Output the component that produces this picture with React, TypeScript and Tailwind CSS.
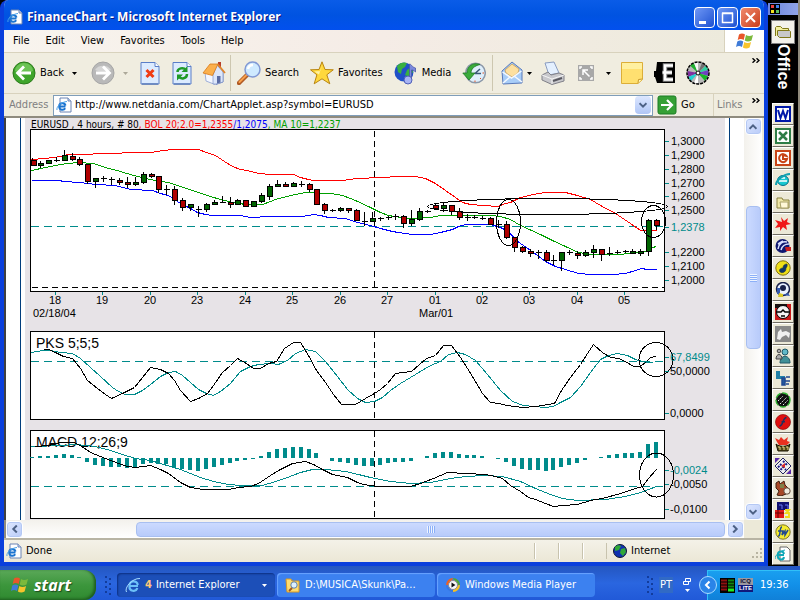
import type { ReactNode } from 'react';

type Candle = [kind: 'r' | 'g' | 'd', top: number, bottom: number, high: number, low: number];

const TEAL = '#008b8b';
const STEP = 7.9;
const FIRST = 32;

const candles: Candle[] = [
  ['r', 160, 165, 158, 166], ['g', 163, 165, 161, 168], ['g', 160, 163, 160, 164], ['d', 160, 160, 157, 162],
  ['g', 155, 160, 150, 161], ['r', 156, 159, 153, 161], ['r', 159, 164, 157, 166], ['r', 164, 181, 164, 184],
  ['g', 178, 181, 178, 188], ['d', 178, 178, 176, 182], ['d', 179, 179, 177, 185], ['r', 180, 182, 178, 185],
  ['r', 182, 184, 177, 188], ['g', 182, 184, 177, 186], ['g', 174, 182, 172, 184], ['r', 174, 176, 173, 178],
  ['r', 176, 189, 176, 193], ['d', 189, 189, 185, 195], ['r', 189, 200, 186, 205], ['r', 200, 207, 198, 211],
  ['g', 204, 207, 204, 211], ['d', 209, 209, 206, 217], ['g', 204, 209, 203, 212], ['g', 202, 204, 200, 205],
  ['d', 202, 202, 196, 203], ['r', 202, 204, 197, 208], ['g', 200, 204, 199, 205], ['r', 200, 206, 200, 206],
  ['g', 201, 206, 201, 206], ['g', 195, 201, 193, 203], ['g', 186, 196, 184, 200], ['g', 184, 186, 180, 187],
  ['r', 184, 186, 182, 187], ['g', 183, 186, 182, 187], ['d', 184, 184, 181, 187], ['r', 184, 189, 183, 192],
  ['r', 189, 204, 189, 205], ['r', 204, 210, 203, 214], ['d', 210, 210, 209, 212], ['g', 208, 210, 207, 212],
  ['r', 208, 210, 208, 213], ['r', 210, 220, 209, 221], ['d', 221, 221, 212, 226], ['g', 218, 221, 212, 222],
  ['d', 218, 218, 217, 221], ['d', 217, 217, 216, 220], ['d', 216, 216, 214, 220], ['r', 216, 223, 215, 228],
  ['g', 219, 223, 210, 226], ['g', 211, 219, 208, 221], ['d', 211, 211, 210, 213], ['r', 205, 208, 203, 210],
  ['g', 205, 208, 203, 212], ['r', 205, 211, 205, 215], ['r', 211, 217, 208, 220], ['d', 217, 217, 214, 221],
  ['d', 217, 217, 215, 219], ['d', 218, 218, 216, 220], ['r', 218, 224, 217, 225], ['d', 224, 224, 220, 228],
  ['r', 224, 237, 221, 239], ['r', 237, 247, 237, 252], ['r', 247, 251, 246, 253], ['r', 251, 253, 249, 257],
  ['d', 252, 252, 250, 259], ['r', 252, 260, 250, 262], ['d', 260, 260, 255, 265], ['g', 252, 260, 252, 271],
  ['d', 252, 252, 250, 255], ['r', 253, 255, 251, 259], ['g', 252, 255, 250, 257], ['g', 249, 252, 245, 258],
  ['r', 249, 254, 249, 261], ['d', 253, 253, 247, 256], ['d', 252, 252, 250, 254], ['d', 251, 251, 250, 253],
  ['g', 251, 253, 249, 254], ['g', 251, 253, 249, 256], ['g', 220, 251, 219, 256], ['r', 220, 225, 219, 230],
];

const histogram = [
  1, 2, 2, 3, 4, 3, 1, -4, -7, -8, -9, -9, -10, -9, -6, -5, -6, -6, -9, -11, -12, -13, -11, -9, -7, -5, -3, -2, -1, 2,
  6, 9, 10, 11, 11, 9, 5, 0, -3, -4, -5, -7, -8, -8, -7, -5, -4, -4, -3, 0, 2, 5, 6, 6, 4, 3, 3, 2, 0, -1,
  -4, -8, -11, -12, -12, -13, -12, -9, -7, -5, -2, 0, 1, 3, 4, 5, 5, 6, 14, 16,
];

const lines = [
  { color: '#ff0000', points: '31,159 45,158 60,156 67,154 92,154 93,153 120,153 123,152 150,152 163,150 172,149 198,149 206,152 215,155 224,161 232,166 240,169 247,170 258,173 270,174 293,174 300,177 308,179 313,180 342,180 356,178 382,177 398,176 415,176 425,178 435,183 445,190 455,197 462,202 470,204 497,206 505,203 510,202 520,197 533,194 545,192 565,192 577,195 590,199 600,205 615,213 630,223 640,230 656,230' },
  { color: '#00a000', points: '31,170 45,167 60,164 68,163 78,162 93,163 105,167 120,171 133,175 150,179 160,181 168,182 180,186 195,191 210,196 220,199 233,202 245,204 262,204 270,201 275,199 290,195 305,192 330,193 342,195 355,200 370,207 380,212 388,215 400,217 410,218 430,217 440,215 490,215 500,216 510,219 520,225 540,234 552,240 565,246 578,252 590,254 620,254 635,252 645,251 648,248 656,246' },
  { color: '#0000ff', points: '31,180 60,180 62,181 80,182 95,184 115,185 130,189 152,190 160,193 168,195 180,203 190,208 197,212 205,214 212,215 240,215 250,217 270,216 302,216 313,214 320,215 328,217 345,218 357,222 370,225 380,228 392,231 404,233 412,234 430,234 440,232 452,229 458,226 465,224 490,224 500,227 508,231 515,239 520,243 533,252 545,261 555,266 565,269 578,273 590,274 612,274 625,273 635,270 641,268 647,269 656,269' },
  { color: TEAL, points: '31,352 42,350 50,350 60,352 72,353 80,358 90,367 100,376 112,387 118,391 125,394 134,394 142,390 150,384 160,376 168,372 175,371 182,375 190,382 198,389 206,393 213,395 220,391 230,383 240,371 250,366 258,364 270,363 278,364 287,360 295,353 305,349 315,351 325,361 337,376 347,389 357,398 365,402 374,401 382,397 390,390 400,383 415,374 430,365 440,361 448,354 457,352 465,354 475,360 487,374 500,390 512,401 523,405 545,407 553,406 560,402 570,397 580,386 590,372 600,359 608,355 617,353 627,355 635,359 645,362 652,362' },
  { color: '#000', points: '43,349 48,349 55,352 63,356 72,358 80,368 87,380 97,388 105,394 111,398 122,393 134,387 142,377 150,367 160,369 168,373 174,380 180,390 190,401 198,398 207,393 213,385 222,372 230,365 237,358 246,363 253,368 260,368 268,363 276,361 284,348 293,342 300,342 308,355 316,370 325,382 333,394 341,404 355,404 365,398 374,393 380,389 387,383 395,373 411,371 426,358 435,355 443,345 451,345 460,357 467,368 475,381 482,393 490,402 499,403 506,405 523,407 535,406 554,403 561,390 570,377 580,364 587,353 593,344 602,352 610,357 618,358 625,361 633,366 640,366 646,361 650,357 656,356' },
  { color: TEAL, points: '31,446 60,445 75,444 95,446 110,450 122,454 135,458 150,460 160,463 170,466 180,469 190,473 200,477 213,481 228,484 240,485 262,485 275,481 287,477 300,472 312,469 325,469 345,471 358,474 370,477 390,481 410,483 430,482 450,478 465,476 485,475 502,476 520,481 535,488 550,494 562,498 577,500 605,499 625,496 640,492 648,489 656,486' },
  { color: '#000', points: '35,446 48,445 60,442 73,442 80,445 90,452 105,458 118,463 127,466 135,467 150,465 160,469 168,473 180,482 190,487 203,489 228,489 238,487 250,486 258,483 270,475 280,469 292,463 305,461 313,464 322,469 332,474 347,477 357,482 363,484 378,486 410,486 420,483 433,478 447,472 485,474 495,476 502,478 510,485 520,491 528,497 535,499 545,503 553,506 562,505 577,504 590,500 602,498 620,493 635,488 642,486 648,478 656,469' },
];

const days: [string, number][] = [
  ['18', 55], ['19', 102], ['20', 150], ['23', 197], ['24', 245], ['25', 292], ['26', 340],
  ['27', 387], ['01', 435], ['02', 482], ['03', 529], ['04', 577], ['05', 624],
];

const scale: [string, number, number, string][] = [
  ['1,3000', 671, 141, '#000'], ['1,2900', 671, 155, '#000'], ['1,2800', 671, 169, '#000'],
  ['1,2700', 671, 183, '#000'], ['1,2600', 671, 196, '#000'], ['1,2500', 671, 210, '#000'],
  ['1,2378', 671, 227, TEAL], ['1,2200', 671, 252, '#000'], ['1,2100', 671, 266, '#000'],
  ['1,2000', 671, 280, '#000'], ['67,8499', 670, 357, TEAL], ['50,0000', 670, 371, '#000'],
  ['0,0000', 670, 413, '#000'], ['-0,0024', 670, 470, TEAL], ['-0,0050', 670, 484, '#000'],
  ['-0,0100', 670, 509, '#000'],
];

function FinanceChart() {
  return (
    <svg width="700" height="402" viewBox="25 118 700 402" className="block shrink-0 [font-family:'Liberation_Sans',Arial,sans-serif] text-[11px]" role="img" aria-label="EURUSD">
      <text x="31" y="128" className="[font-family:'DejaVu_Sans_Condensed','DejaVu_Sans',sans-serif] text-[10px]">
        EURUSD , 4 hours, # 80<tspan fill="#ff0000">, BOL 20;2.0=1,2355</tspan>
        <tspan fill="#0000ff">/1,2075</tspan>
        <tspan fill="#00a000">, MA 10=1,2237</tspan>
      </text>
      <g shapeRendering="crispEdges" fill="#fff" stroke="#000">
        <rect x="30.5" y="129.5" width="634" height="162" />
        <rect x="30.5" y="331.5" width="634" height="88" />
        <rect x="30.5" y="430.5" width="634" height="88" />
      </g>
      <g className="text-sm">
        <text x="36" y="348">PKS 5;5;5</text>
        <text x="36" y="447">MACD 12;26;9</text>
      </g>
      <g shapeRendering="crispEdges" fill="none">
        <path d="M31 226.5H664M31 361.5H664M31 486.5H664" stroke={TEAL} strokeDasharray="8 5" />
        <path d="M32 287.5H664M374.5 131V288M374.5 332V419M374.5 431V518" stroke="#000" strokeDasharray="6 4" />
        {histogram.map((v, i) => (
          <rect key={i} x={Math.round(FIRST + i * STEP) - 2} y={v > 0 ? 458 - v : 458} width="4" height={Math.abs(v)} fill={TEAL} />
        ))}
        {lines.map((l) => (
          <polyline key={l.points} points={l.points} stroke={l.color} transform="translate(0.5 0.5)" />
        ))}
        {candles.map(([kind, top, bottom, high, low], i) => {
          const x = Math.round(FIRST + i * STEP) + 0.5;
          return (
            <g key={i} stroke="#000">
              <path d={`M${x} ${high}V${low}`} />
              {kind === 'd' ? (
                <path d={`M${x - 3} ${top + 0.5}H${x + 3}`} />
              ) : (
                <rect x={Math.max(x - 2, 31.5)} y={top + 0.5} width="5" height={Math.max(bottom - top, 2)} fill={kind === 'r' ? '#b00000' : '#006400'} />
              )}
            </g>
          );
        })}
        <g stroke="#000">
          <ellipse cx="547.5" cy="206.5" rx="120" ry="8" />
          <ellipse cx="508.5" cy="222.5" rx="12" ry="23" />
          <ellipse cx="653.5" cy="221.5" rx="12" ry="16" />
          <circle cx="656" cy="359.5" r="17" />
          <ellipse cx="656.5" cy="475" rx="17" ry="22" />
        </g>
      </g>
      {days.map(([label, x]) => (
        <g key={label}>
          <path d={`M${x + 0.5} 292V295`} stroke={TEAL} />
          <text x={x} y="304" textAnchor="middle">{label}</text>
        </g>
      ))}
      <text x="33" y="317">02/18/04</text>
      <text x="419" y="317">Mar/01</text>
      {scale.map(([label, x, y, color]) => (
        <g key={label}>
          <path d={`M665 ${y + 0.5}H669`} stroke={TEAL} />
          <text x={x} y={y + 4} fill={color}>{label}</text>
        </g>
      ))}
    </svg>
  );
}

function PageIcon({ className = 'size-4' }: { className?: string }) {
  return (
    <svg viewBox="0 0 16 16" className={className} aria-hidden="true">
      <path d="M4 1h8l3 3v11H4z" fill="#fff" stroke="#6b84b5" />
      <path d="M12 1v3h3" fill="#c9d8f0" stroke="#6b84b5" />
      <path d="M9.500 9.500H3.200a3.200 3 0 0 1 6.300-1M3.200 10a3.200 3 0 0 0 6 1.200" fill="none" stroke="#1c74d0" strokeWidth="2" />
      <path d="M1 13C0 10 5 5 11 4.500" fill="none" stroke="#49a0e8" />
    </svg>
  );
}

function FlagIcon({ className }: { className: string }) {
  return (
    <svg viewBox="0 0 20 18" className={className} aria-hidden="true">
      <path d="M4 2.500c2-1.500 4-1.500 6 0L8.700 8c-2-1.400-4-1.400-6 0z" fill="#e8562a" />
      <path d="M11 3c2 1.500 4.500 1.400 7 0l-1.500 5.500c-2.500 1.400-4.800 1.300-6.800 0z" fill="#7cb93c" />
      <path d="M2.300 9.500c2-1.400 4-1.400 6 0L7 15c-2-1.400-4-1.400-6 0z" fill="#3f7bd8" />
      <path d="M9.300 10c2 1.400 4.500 1.400 6.800 0l-1.500 5.500c-2.400 1.400-4.700 1.300-6.700 0z" fill="#f8c42c" />
    </svg>
  );
}

const Caret = () => (
  <svg viewBox="0 0 5 3" className="h-[3px] w-[5px] shrink-0" fill="currentColor" aria-hidden="true"><path d="M0 0h5L2.500 3z" /></svg>
);

function Chevron({ turn }: { turn: string }) {
  return (
    <svg viewBox="0 0 8 8" className={`size-2 ${turn}`} fill="none" stroke="#4d6185" strokeWidth="2" aria-hidden="true">
      <path d="M.5 5.800 4 2.300l3.500 3.500" />
    </svg>
  );
}

const More = () => (
  <svg viewBox="0 0 8 5" className="h-[5px] w-2 shrink-0" fill="none" stroke="#000" strokeWidth="1.400" aria-hidden="true">
    <path d="M.5.3 2.900 2.500.5 4.700M4.500.3 6.900 2.500 4.500 4.700" />
  </svg>
);

function ScrollButton({ label, turn }: { label: string; turn: string }) {
  return (
    <button type="button" aria-label={label} className="flex size-[17px] shrink-0 items-center justify-center rounded-sm border border-white bg-gradient-to-br from-[#dde7ff] to-[#b9cbf8] shadow-[inset_0_0_0_1px_#b4c8f4]">
      <Chevron turn={turn} />
    </button>
  );
}

function Tool({ label, caret, faded, children }: { label: string; caret?: boolean; faded?: boolean; children: ReactNode }) {
  return (
    <button type="button" aria-label={label} className={`flex items-center ${faded ? 'gap-2 text-[#aca899]' : 'gap-0.5'}`}>
      <svg viewBox="0 0 24 24" className="size-6" aria-hidden="true">{children}</svg>
      {caret && <Caret />}
    </button>
  );
}

const Sheet = ({ children }: { children: ReactNode }) => (
  <>
    <path d="M3 1.500h14l4 4V23H3z" fill="#dcebff" stroke="#5a7ec8" />
    <path d="M17 1.500v4h4" fill="#fff" stroke="#5a7ec8" />
    <path d="M4 23h16" stroke="#3f62a8" />
    {children}
  </>
);

function Toolbar() {
  return (
    <div className="flex h-[41px] items-center border-b border-[#d8d2bd] pl-2">
      <button type="button" className="flex items-center gap-1">
        <svg viewBox="0 0 24 24" className="size-6" aria-hidden="true">
          <circle cx="12" cy="12" r="11" fill="#3fa52b" stroke="#2b7a1b" />
          <path d="M3 10a9 8 0 0 1 18 0c-5 3-13 3-18 0z" fill="#7fd066" opacity=".7" />
          <path d="M12 5.500 5.500 12l6.500 6.500M6.500 12H19" fill="none" stroke="#fff" strokeWidth="2.800" />
        </svg>
        Back
        <span className="ml-1"><Caret /></span>
      </button>
      <div className="ml-3.5 flex items-center">
        <Tool label="Forward" caret faded>
          <circle cx="12" cy="12" r="11" fill="#b9b9b9" stroke="#a5a5a5" />
          <path d="M4 9a9 8 0 0 1 16 0c-5 2-11 2-16 0z" fill="#d6d6d6" />
          <path d="m12 5.500 6.500 6.500-6.500 6.500M17.500 12H5" fill="none" stroke="#fff" strokeWidth="2.800" />
        </Tool>
      </div>
      <div className="ml-2.5 flex items-center gap-2">
        <Tool label="Stop">
          <Sheet><path d="m8.500 9 7 7m0-7-7 7" stroke="#f03c14" strokeWidth="3" /></Sheet>
        </Tool>
        <Tool label="Refresh">
          <Sheet>
            <path d="M7.500 11c0-4 6-5 8.500-2M17 13c0 5-6 5.500-8.500 2.500" fill="none" stroke="#1f9a28" strokeWidth="2.500" />
            <path d="M17.500 5v6h-6zM7 19.500v-6h6z" fill="#1f9a28" />
          </Sheet>
        </Tool>
        <Tool label="Home">
          <path d="M16 1h3v6h-3z" fill="#b8402a" />
          <path d="M13 11h8v10l-7 2.500z" fill="#b9cdf0" stroke="#7c90c4" />
          <path d="M3 11l10 2v10.500L4 20z" fill="#f4f7ff" stroke="#9fb0d8" />
          <path d="M15 4l-4 10v9h3l7-2V11z" fill="#dce6fa" stroke="#7c90c4" strokeWidth=".7" />
          <path d="M8 3 1 12l9.500 2.500L16 3z" fill="#fbb04c" stroke="#d87818" strokeWidth=".8" />
          <path d="m15.500 3 7.500 9" stroke="#e08428" strokeWidth="1.800" />
          <path d="M15 15h3.500v6.500L15 22.500z" fill="#5a6ca4" />
        </Tool>
      </div>
      <div className="ml-1 flex h-9 items-center gap-[11px] border-l border-[#cdc7b0] pl-1.5">
        <button type="button" className="flex items-center gap-1">
          <svg viewBox="0 0 24 24" className="size-6" aria-hidden="true">
            <path d="m2 22 8-8" stroke="#b05a24" strokeWidth="4.500" strokeLinecap="round" />
            <path d="m2.500 21 7-7" stroke="#f8a04c" strokeWidth="2" strokeLinecap="round" />
            <circle cx="15.500" cy="8.500" r="7.500" fill="#cfeaff" stroke="#8299d4" strokeWidth="1.500" />
            <path d="M11 8a5 5 0 0 1 5-4" fill="none" stroke="#fff" strokeWidth="2.500" />
          </svg>
          Search
        </button>
        <button type="button" className="flex items-center gap-1">
          <svg viewBox="0 0 24 24" className="size-6" aria-hidden="true">
            <path d="m12 .8 3 7.700 8.300.3-6.500 5 3 9-7.800-5-7.800 5 2.700-9-6.400-5 8.500-.3z" fill="#ffd83c" stroke="#b88410" />
            <path d="m12 4-1.500 6-6 .5L9 13.500z" fill="#fff4a8" />
          </svg>
          Favorites
        </button>
        <button type="button" className="flex items-center gap-1">
          <svg viewBox="0 0 24 24" className="size-6" aria-hidden="true">
            <circle cx="10" cy="11" r="9.500" fill="#2050c8" />
            <path d="M3 5c3-4 8-4 10-3l-2 4-3 2-1 5-3-2zM13 9l4-3 2 5-4 5-4-2z" fill="#38b040" />
            <path d="M15.500 18V3c2 0 2 3 6 4v4c-2-2-3-2-4-2v10" fill="#7a88dc" stroke="#4a58a8" strokeWidth=".8" />
            <circle cx="14" cy="19" r="4" fill="#a8b4f4" stroke="#5060b8" />
          </svg>
          Media
        </button>
        <Tool label="History">
          <circle cx="13.500" cy="12" r="9.800" fill="#dfeffc" stroke="#8c98a8" strokeWidth="1.500" />
          <path d="M13 12.500 18 8M13 12.500h6" stroke="#385878" strokeWidth="1.500" />
          <path d="M20.500 12h1.500M13 19.500V21M18 17l1 1" stroke="#e05020" />
          <path d="M18 3.500C11 1 5 5 5 12H.8L7 19l6-7H9c0-4 3-7 9-8.500z" fill="#3cac3c" stroke="#1c7824" strokeWidth=".8" />
        </Tool>
      </div>
      <div className="ml-1.5 flex h-9 items-center gap-[9px] border-l border-[#cdc7b0] pl-2">
        <Tool label="Mail" caret>
          <path d="M1 10 11 1l10 8v13L2 23z" fill="#a8cdf8" stroke="#5878b8" />
          <path d="m4 9 7-6 7 5-1 4-6 4-6-4z" fill="#fde0a0" stroke="#c89848" strokeWidth=".7" />
          <path d="m1.500 11 9 6 10-7M2 22l7-6m12 5-8-6" fill="none" stroke="#f4f9ff" strokeWidth="1.500" />
        </Tool>
        <Tool label="Print">
          <path d="M4 2 13 1l5 11-10 2z" fill="#e4f0ff" stroke="#8a9cc0" />
          <path d="m1 14 6-3 3 3 8-2 5 2v6l-12 3.500L1 19z" fill="#c8c8cc" stroke="#808088" />
          <path d="m1 14 10 4 12-4M11 18v5" fill="none" stroke="#f4f4f4" />
          <path d="m12 20 9-3" stroke="#585860" strokeWidth="2" />
        </Tool>
        <button type="button" aria-label="Resize" className="flex items-center gap-2">
          <svg viewBox="0 0 24 24" className="size-6" aria-hidden="true">
            <path d="M4 4h16v16H4z" fill="#a8a8a8" />
            <path d="M8 6H6v2M16 6h2v2M6 16v2h2M18 16v2h-2M15.500 15.500 9 9M9 14V9h5" fill="none" stroke="#fff" strokeWidth="1.500" />
          </svg>
          <Caret />
        </button>
        <Tool label="Note">
          <path d="M1.500 1.500h21v17l-4.500 4H1.500z" fill="#ffe070" stroke="#dcae38" />
          <path d="M2 2h20v6H2z" fill="#fff0a0" />
          <path d="m18 22 .5-3.500 4-.5" fill="#fff6c0" stroke="#c89828" />
        </Tool>
        <Tool label="Editor">
          <path d="M4 1h18v21H4l-2-6H1v-6h2z" fill="#000" />
          <path d="M20 4.500h-8v14h8M9.500 11.500H19" fill="none" stroke="#888" strokeWidth="4.500" />
          <path d="M20 4.500h-8v14h8M9.500 11.500H19" fill="none" stroke="#fff" strokeWidth="2.500" />
        </Tool>
        <Tool label="Disc">
          <circle cx="12" cy="12" r="11" fill="#b8b8b8" />
          <path d="M12 12 4 4.500 8 2z" fill="#20b030" />
          <path d="M12 12 8 2l4-1z" fill="#f8f8f8" />
          <path d="m12 12 8-7.500L22.500 9z" fill="#30d0a0" />
          <path d="M12 12 22.500 9v6z" fill="#7040c0" />
          <path d="M12 12 1.500 10 2 16z" fill="#8030a0" />
          <path d="m12 12-10 4 3 4z" fill="#20d0d0" />
          <path d="m12 12 7 8 3-5z" fill="#18b828" />
          <path d="m12 12-4 10 4 1z" fill="#fff" />
          <path d="m12 12 4-10.500L20 4z" fill="#707070" />
          <circle cx="12" cy="12" r="11" fill="none" stroke="#000" strokeWidth="1.500" strokeDasharray="3 1" />
          <circle cx="12" cy="12" r="2" fill="#fff" stroke="#000" />
        </Tool>
      </div>
      <span className="mt-[5px] mr-1 ml-auto self-start"><More /></span>
    </div>
  );
}

const officeIcons: { name: string; art: ReactNode }[] = [
  { name: 'Word', art: <><path d="M1 1h14v14H1z" fill="#fff" stroke="#0018a8" strokeWidth="2" /><path d="m3 4 2.500 8L8 5l2.500 7L13 4" fill="none" stroke="#0018a8" strokeWidth="2" /></> },
  { name: 'Excel', art: <><path d="M1 1h14v14H1z" fill="#fff" stroke="#2e7d46" strokeWidth="2" /><path d="m4 4 8 8m0-8-8 8" stroke="#2e7d46" strokeWidth="2.500" /></> },
  { name: 'PowerPoint', art: <><path d="M1 1h14v14H1z" fill="#fff" stroke="#c84418" strokeWidth="2" /><path d="M11.500 6A4 4 0 1 0 12 9H8V5z" fill="none" stroke="#c84418" strokeWidth="2" /></> },
  { name: 'Explorer', art: <><ellipse cx="8" cy="8.500" rx="5.500" ry="5" fill="#18c8d0" stroke="#087088" /><path d="M4 9h8M6 6h4" stroke="#fff" strokeWidth="1.500" /><path d="M1 13C1 8 9 2 15 2" fill="none" stroke="#10a0b0" strokeWidth="2" /></> },
  { name: 'Folder', art: <><path d="M2 4h5l1 2h6v8H2z" fill="#f0e8a8" stroke="#888040" /><path d="M5 8h8v6H6z" fill="#fff8d8" stroke="#a8a068" /></> },
  { name: 'Splash', art: <path d="m7 6-1-5 3 4 4-3-1 4 4 2-5 1 1 5-4-3-3 4v-4l-5 1 3-4-3-4z" fill="#f01818" /> },
  { name: 'Shell', art: <><circle cx="7.500" cy="8" r="7" fill="#101870" /><path d="M3 11C4 5 8 3 12 4M6 12c1-4 4-6 8-6M3 6l5-3" fill="none" stroke="#d8e0ff" strokeWidth="1.500" /><path d="M10 9h6v4h-5z" fill="#c82020" /></> },
  { name: 'Winamp', art: <><circle cx="8" cy="8" r="7.200" fill="#f0e018" stroke="#807010" /><path d="M12 4c-2 0-4 1-4 4-2 0-3.500 1-3.500 2.500S6 13 8 12.500s3-2 3-4.500c1-1 1.500-2.500 1-4z" fill="#103868" stroke="#203048" strokeWidth=".6" /></> },
  { name: 'Globe', art: <><circle cx="8" cy="7" r="6.500" fill="#e8f0ff" stroke="#182048" strokeWidth="1.500" /><circle cx="8" cy="6" r="3" fill="#182048" /><path d="M2 6h3v6H2zM8 13l5-2 2 3z" fill="#3058b0" /><path d="m4 11 4 1v3H3z" fill="#d8c828" /></> },
  { name: 'Disc', art: <><path d="M0 0h16v16H0z" fill="#c81818" /><path d="M0 0h12v4H0z" fill="#181010" /><circle cx="8" cy="8" r="6.500" fill="#f4f4f4" stroke="#000" /><path d="M2 8h4l2-2 2 2h4M6 12h4" stroke="#000" strokeWidth="1.500" fill="none" /></> },
  { name: 'Fish', art: <><path d="M0 0h16v16H0z" fill="#888" /><path d="m2 13 1-7 3-3 1 3 4-1 4 2-1 5-3-3-4 2-2 3z" fill="#f0f0f0" /></> },
  { name: 'Messenger', art: <><circle cx="10" cy="4" r="3" fill="#60b8c8" stroke="#205868" /><path d="M5 15c0-9 10-9 10 0z" fill="#409098" stroke="#205868" /><circle cx="4" cy="3" r="1.800" fill="#a8a8a8" stroke="#444" /><path d="M1 11c0-6 6-6 6 0z" fill="#aaa" stroke="#444" /></> },
  { name: 'Network', art: <><path d="M1 1h4v8H1zM5 6h5v3H5z" fill="#2080a8" /><path d="M7 8h3v7H7zM10 11h5M11 7h4M11 14h3" fill="#2058a0" stroke="#204890" strokeWidth="1.500" /></> },
  { name: 'Matrix', art: <><circle cx="8" cy="8" r="7" fill="#101010" stroke="#30b030" strokeDasharray="6 2" strokeWidth="1.500" /><path d="m3 9 5-5M5 12l7-7M8 13l5-5" stroke="#e8e8e8" strokeDasharray="1.500 1" /></> },
  { name: 'Flash', art: <><circle cx="8" cy="8" r="7.500" fill="#e01010" stroke="#900808" strokeWidth=".7" /><path d="M11.500 3.500c-4 0-3 8.500-7 8.500M6.500 7.800h3.500" fill="none" stroke="#203060" strokeWidth="1.600" /></> },
  { name: 'Nero', art: <><path d="M2 6 0 2l4 2 2-3 3 3 4-3-1 4 3 1-3 3H4z" fill="#e83020" /><path d="M1 8c3 3 11 3 14 0l-2 7H3z" fill="#504818" stroke="#181400" /><path d="M3 11h2v3M7 11h2v3M11 11h2v3" stroke="#e8d888" fill="none" /></> },
  { name: 'Checker', art: <><path d="m8 0 8 8-8 8-8-8z" fill="#f0f0f0" stroke="#202060" /><path d="m5 6 6 6M8 3l5 5M3 8l5 5" stroke="#181888" strokeWidth="2" strokeDasharray="2 1.500" /><path d="M0 0h5L0 5zM16 16h-5l5-5z" fill="#5828a8" /><path d="m6 8 4-3v5z" fill="#d82828" /></> },
  { name: 'Donkey', art: <><path d="M1 3 4 1l1 3 4-3 1 4 3 3-2 6-5 2-4-1 2-4-3-3z" fill="#a84828" stroke="#402010" /><path d="M5 4h4v4H5z" fill="#808048" /><circle cx="12" cy="11" r="3.200" fill="#f0ece0" stroke="#604838" /></> },
  { name: 'Puzzle', art: <><path d="M2 0h12v8H2z" fill="#101070" /><path d="M4 3h3v4M10 3h3v4" stroke="#6878f0" fill="none" /><path d="M0 8h9v8H0z" fill="#e01818" /><path d="M3 8v8M0 11h9" stroke="#600" /><path d="M10 8h4l-3 3h3v4h-4" fill="none" stroke="#f0d818" strokeWidth="1.800" /></> },
  { name: 'Fireworks', art: <><circle cx="8" cy="8" r="7.200" fill="#f4ec30" stroke="#807820" /><path d="M7 3C4 3 6 13 3 12M3 7h5l-1 4 3-4v4l3-5" fill="none" stroke="#204890" strokeWidth="1.500" /></> },
  { name: 'Web page', art: <><path d="M5 1h7l3 3v11H5z" fill="#fff" stroke="#666" /><path d="M9 9H3a3 3 0 0 1 6-1M3 10a3 3 0 0 0 6 1" fill="none" stroke="#10a8b8" strokeWidth="2" /><path d="M0 13C0 9 5 5 10 4" fill="none" stroke="#10a8b8" /></> },
];

function OfficeBar() {
  return (
    <nav aria-label="Office" className="flex w-8 shrink-0 flex-col border-r-2 border-[#8f8a7c] bg-black">
      <div className="mt-[3px] mb-[5px] flex h-3 items-center bg-gradient-to-r from-[#6c84dc] to-[#90a4e8] pl-0.5">
        <svg viewBox="0 0 10 10" className="size-[10px]" aria-hidden="true">
          <path d="M0 0h10v10H0z" fill="#000" />
          <path d="M1 1h3v3H1z" fill="#f04040" />
          <path d="M6 1h3v3H6z" fill="#4080f0" />
          <path d="M1 6h3v3H1z" fill="#f0e020" />
          <path d="M6 6h3v3H6z" fill="#60c060" />
        </svg>
      </div>
      <div className="flex flex-col items-center">
        <button type="button" aria-label="Open folder" className="flex h-6 w-6 items-center justify-center border border-[#808080] bg-[#f4f2ea]">
          <svg viewBox="0 0 18 16" className="h-4 w-[18px]" aria-hidden="true">
            <path d="M1.500 12V3.500l1-1h4l2 2h6v2" fill="#f4f0a0" stroke="#807818" />
            <path d="M3.500 6.500h12l1 1v6h-11l-2-2z" fill="#c8c8c8" stroke="#807818" />
          </svg>
        </button>
        <div className="flex h-[59px] items-center [font-family:'Liberation_Sans',Arial,sans-serif] text-base leading-none font-bold text-white [writing-mode:vertical-rl]">Office</div>
        {officeIcons.map((o) => (
          <button key={o.name} type="button" aria-label={o.name} className="flex size-[22px] items-center justify-center border border-t-white border-r-[#6f6c62] border-b-[#6f6c62] border-l-white bg-[#ece9d8]">
            <svg viewBox="0 0 16 16" className="size-4" aria-hidden="true">{o.art}</svg>
          </button>
        ))}
      </div>
    </nav>
  );
}

const captionButton = 'flex size-[21px] items-center justify-center rounded-sm border border-white bg-gradient-to-br';

function BrowserWindow() {
  return (
    <main className="flex min-w-0 flex-1 flex-col overflow-hidden rounded-t-lg border-x-4 border-b-4 border-[#0a3fdc] bg-[#f0ede0]">
      <header className="-mx-1 flex h-[30px] items-center bg-gradient-to-b from-[#0a5ce8] via-[#0053e1] to-[#0250ee] px-[7px] pt-1 text-white">
        <PageIcon />
        <h1 className="ml-1 [font-family:'Open_Sans','Noto_Sans',sans-serif] text-[12px] font-bold [text-shadow:1px_1px_#0a1883]">FinanceChart - Microsoft Internet Explorer</h1>
        <div className="ml-auto flex gap-0.5">
          <button type="button" aria-label="Minimize" className={`${captionButton} from-[#6f97f5] to-[#1d4fd0]`}>
            <svg viewBox="0 0 19 19" className="size-[19px]" aria-hidden="true"><path d="M4 14.500h7" stroke="#fff" strokeWidth="3" /></svg>
          </button>
          <button type="button" aria-label="Maximize" className={`${captionButton} from-[#6f97f5] to-[#1d4fd0]`}>
            <svg viewBox="0 0 19 19" className="size-[19px]" aria-hidden="true"><path d="M4.500 5.500h10v9h-10zM4 5h11" fill="none" stroke="#fff" strokeWidth="1.500" /></svg>
          </button>
          <button type="button" aria-label="Close" className={`${captionButton} from-[#f08a6c] to-[#c83a14]`}>
            <svg viewBox="0 0 19 19" className="size-[19px]" aria-hidden="true"><path d="m5 5 9 9m0-9-9 9" stroke="#fff" strokeWidth="2" /></svg>
          </button>
        </div>
      </header>
      <div className="flex h-[23px] items-stretch border-b border-[#d8d2bd] bg-gradient-to-r from-[#f8f4ee] via-[#f5ece6] to-[#eceadb]">
        <div className="flex flex-1 items-center pl-px">
          {['File', 'Edit', 'View', 'Favorites', 'Tools', 'Help'].map((m) => (
            <button key={m} type="button" className="px-2">{m}</button>
          ))}
        </div>
        <div className="flex w-10 items-center justify-center border-l border-[#d8d2bd] bg-white"><FlagIcon className="h-[18px] w-5" /></div>
      </div>
      <Toolbar />
      <div className="flex h-6 items-center border-b-2 border-[#8f8b7e]">
        <label htmlFor="address" className="w-[49px] pl-[5px] text-[#808080]">Address</label>
        <div className="flex h-[21px] flex-1 items-center border border-[#7f9db9] bg-white pr-px pl-0.5">
          <PageIcon />
          <input id="address" defaultValue="http://www.netdania.com/ChartApplet.asp?symbol=EURUSD" className="min-w-0 flex-1 pl-[3px] outline-none" />
          <button type="button" aria-label="Show addresses" className="flex h-[18px] w-4 items-center justify-center rounded-sm bg-gradient-to-b from-[#dde7ff] to-[#b0c6f6]"><Chevron turn="rotate-180" /></button>
        </div>
        <button type="button" className="flex w-[60px] items-center gap-1 pl-1">
          <svg viewBox="0 0 20 20" className="size-5" aria-hidden="true">
            <rect x="1" y="1" width="18" height="18" rx="2" fill="#35a035" stroke="#1c7c24" />
            <path d="M4 10h11M10 5l5 5-5 5" fill="none" stroke="#fff" strokeWidth="2.200" />
          </svg>
          Go
        </button>
        <div className="flex h-full w-[51px] justify-between border-l border-[#d8d2bd] pr-1 pl-[3px]">
          <span className="self-center text-[#808080]">Links</span>
          <span className="mt-1"><More /></span>
        </div>
      </div>
      <div className="flex min-h-0 flex-1 bg-white">
        <div className="flex min-w-0 flex-1 overflow-hidden border-l-2 border-[#404040] pl-[14px]">
          <div className="flex min-w-0 flex-1 border-x border-[#003c7c] px-1">
            <div className="flex-1 overflow-hidden bg-[#e7e3e7]"><FinanceChart /></div>
          </div>
          <div className="w-[14px]" />
        </div>
        <div className="flex w-[20px] flex-col items-center border-r-2 border-[#ece9d8] bg-gradient-to-r from-[#f3f1ec] to-white">
          <ScrollButton label="Scroll up" turn="" />
          <div className="grow-[71] basis-0" />
          <div className="flex w-[15px] grow-[142] basis-0 flex-col items-center justify-center gap-px rounded-sm border border-[#a8bff0] bg-gradient-to-r from-[#cbdaff] to-[#b8cbfa]">
            {[0, 1, 2, 3].map((n) => <span key={n} className="h-px w-[7px] bg-[#eef4ff] shadow-[0_1px_#8cb0f8]" />)}
          </div>
          <div className="grow-[155] basis-0" />
          <ScrollButton label="Scroll down" turn="rotate-180" />
        </div>
      </div>
      <div className="flex h-[18px] items-center border-l-2 border-[#8f8b7e] bg-gradient-to-b from-[#f3f1ec] to-white">
        <ScrollButton label="Scroll left" turn="-rotate-90" />
        <div className="grow-[113] basis-0" />
        <div className="flex h-[15px] grow-[590] basis-0 items-center justify-center gap-px rounded-sm border border-[#a8bff0] bg-gradient-to-b from-[#cbdaff] to-[#b8cbfa]">
          {[0, 1, 2, 3].map((n) => <span key={n} className="h-[7px] w-px bg-[#eef4ff] shadow-[1px_0_#8cb0f8]" />)}
        </div>
        <div className="grow-[2] basis-0" />
        <ScrollButton label="Scroll right" turn="rotate-90" />
        <div className="w-5 self-stretch bg-[#ece9d8]" />
      </div>
      <footer className="flex h-6 items-center border-t-2 border-[#b8b4a4] bg-gradient-to-b from-[#f4f2e8] to-[#ebe7d6] pl-0.5">
        <PageIcon />
        <span className="ml-1 flex-1">Done</span>
        {[0, 1, 2].map((n) => <span key={n} className="h-4 w-6 border-l border-[#c8c3ae] shadow-[inset_1px_0_#fff]" />)}
        <div className="flex h-4 w-[158px] items-center gap-1 border-l border-[#c8c3ae] pl-1.5">
          <svg viewBox="0 0 14 14" className="size-[14px]" aria-hidden="true">
            <circle cx="7" cy="7" r="6.500" fill="#1030b0" stroke="#101830" />
            <path d="M2 3c2-2 5-2 6-1L6 6 2 7zM8 5l4-1 1 4-3 4-3-3z" fill="#30a838" />
          </svg>
          <span className="flex-1">Internet</span>
          <svg viewBox="0 0 12 12" className="mr-px size-3 self-end" fill="#b8b4a2" aria-hidden="true">
            <path d="M9 1h2v2H9zM9 5h2v2H9zM5 5h2v2H5zM9 9h2v2H9zM5 9h2v2H5zM1 9h2v2H1z" />
          </svg>
        </div>
      </footer>
    </main>
  );
}

const taskButton = 'flex h-6 w-[158px] items-center gap-1 rounded-sm px-2 text-left';

function Dots() {
  return (
    <svg viewBox="0 0 6 20" className="h-5 w-1.5 shrink-0" fill="#123c9c" aria-hidden="true">
      <path d="M0 1h2v2H0zM4 3h2v2H4zM0 6h2v2H0zM4 8h2v2H4zM0 11h2v2H0zM4 13h2v2H4zM0 16h2v2H0zM4 18h2v2H4z" />
    </svg>
  );
}

function Taskbar() {
  return (
    <div className="flex h-[34px] items-end bg-gradient-to-b from-[#2456c0] via-[#2a66e0] to-[#2159d8] text-white">
      <button type="button" className="flex h-[30px] w-24 items-center gap-1 rounded-r-xl bg-gradient-to-b from-[#5aa858] via-[#3c963c] to-[#2f8a30] pl-2.5 shadow-[inset_-2px_-1px_3px_#1d5a1d]">
        <FlagIcon className="h-[18px] w-5" />
        <span className="[font-family:'Open_Sans','Noto_Sans',sans-serif] text-base leading-none font-bold italic [text-shadow:1px_1px_1px_#1c4c1c]">start</span>
      </button>
      <div className="flex h-[30px] flex-1 items-center">
        <span className="mr-1.5 ml-[9px] flex"><Dots /></span>
        <div className="flex flex-1 gap-0.5">
          <button type="button" className={`${taskButton} bg-[#1c4fb8] shadow-[inset_1px_1px_2px_#0c2f80]`}>
            <svg viewBox="0 0 16 16" className="size-4" aria-hidden="true">
              <path d="M13 9H4.500a4 4 0 0 1 8.300-1M4.500 9.500a4 4 0 0 0 7.800 1.500" fill="none" stroke="#6cc0f8" strokeWidth="2.200" />
              <path d="M1.500 15C-1 11 7 1 15 1.500" fill="none" stroke="#a8dcff" />
            </svg>
            <b className="text-[#ffc878]">4</b>
            <span className="flex-1">Internet Explorer</span>
            <Caret />
          </button>
          <button type="button" className={`${taskButton} bg-[#3c81f0] shadow-[inset_1px_1px_1px_#6aa4ff]`}>
            <svg viewBox="0 0 16 16" className="size-4" aria-hidden="true">
              <path d="M1 2h5l1 2h7v11H2z" fill="#ffdc70" stroke="#d89820" />
              <circle cx="9" cy="8" r="3.200" fill="#dcf0ff" stroke="#6080a8" />
              <path d="m7 11-3 3" stroke="#a05820" strokeWidth="2" />
            </svg>
            D:\MUSICA\Skunk\Pa...
          </button>
          <button type="button" className={`${taskButton} bg-[#3c81f0] shadow-[inset_1px_1px_1px_#6aa4ff]`}>
            <svg viewBox="0 0 16 16" className="size-4" aria-hidden="true">
              <path d="M8 1a7 7 0 0 1 7 7h-4z" fill="#50a838" />
              <path d="M8 1a7 7 0 0 0-7 7h4z" fill="#f06020" />
              <path d="M1 8a7 7 0 0 0 7 7l1-4z" fill="#3878e0" />
              <path d="M15 8a7 7 0 0 1-7 7V9z" fill="#f8c020" />
              <circle cx="8" cy="8" r="4.500" fill="#f8f8f8" stroke="#889" />
              <path d="M6.500 5.500v5l4-2.500z" fill="#111" />
            </svg>
            Windows Media Player
          </button>
        </div>
        <Dots />
        <span className="mr-2.5 ml-1.5 bg-[#316ac5] px-px">PT</span>
        <div className="mr-4 flex flex-col items-center gap-1">
          <svg viewBox="0 0 8 7" className="h-[7px] w-2" fill="none" stroke="#fff" aria-hidden="true"><path d="M2.500.5h5v3h-5zM.5 3.500h5v3h-5z" fill="#2a66e0" /></svg>
          <Caret />
        </div>
      </div>
      <div className="flex h-[30px] w-[93px] items-center bg-gradient-to-b from-[#1aa0f0] via-[#1290e8] to-[#1080d8] shadow-[inset_1px_1px_#30c0f8]">
        <button type="button" aria-label="Show hidden icons" className="mr-[3px] -ml-2 shrink-0">
          <svg viewBox="0 0 18 18" className="size-[18px]" aria-hidden="true">
            <circle cx="9" cy="9" r="8.500" fill="#2a84e8" stroke="#a8dcff" />
            <path d="M10.500 5.500 7 9l3.500 3.500" fill="none" stroke="#fff" strokeWidth="2" />
          </svg>
        </button>
        <svg viewBox="0 0 15 15" className="size-[15px] shrink-0" aria-hidden="true">
          <path d="M0 0h15v15H0z" fill="#000" />
          <path d="M1 2.500h6M1 5.500h6M1 8.500h6M1 11.500h6" stroke="#901010" strokeWidth="2" />
          <path d="M8 2.500h6M8 5.500h6M8 8.500h6" stroke="#108810" strokeWidth="2" />
          <path d="M8 12h6" stroke="#20f020" strokeWidth="3" />
        </svg>
        <div className="mx-[3px] flex w-[15px] flex-col items-center overflow-hidden bg-[#10187c] [font-family:'Liberation_Sans',Arial,sans-serif] text-[6px] leading-[7px] font-bold">
          <span className="w-full bg-[#9c98a0] text-center text-[#101030]">ICQ</span>
          <span>LITE</span>
        </div>
        <time className="pl-1">19:36</time>
      </div>
    </div>
  );
}

export default function App() {
  return (
    <div className="flex min-h-screen flex-col bg-black [font-family:'DejaVu_Sans_Condensed','DejaVu_Sans',Tahoma,sans-serif] text-[11px] leading-4 text-black">
      <div className="flex flex-1">
        <BrowserWindow />
        <OfficeBar />
      </div>
      <Taskbar />
    </div>
  );
}
